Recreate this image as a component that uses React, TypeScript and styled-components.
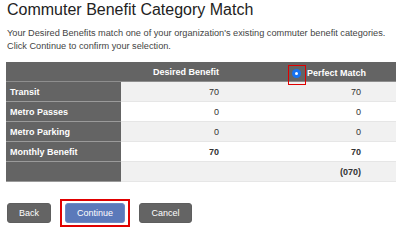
import React, { useState } from "react";
import styled, { createGlobalStyle } from "styled-components";

const GlobalStyle = createGlobalStyle`
  body {
    margin: 0;
    background: #ffffff;
    font-family: "Liberation Sans", Arial, sans-serif;
    color: #333333;
  }
`;

const Page = styled.div`
  padding: 0 2px 0 7px;
`;

const Title = styled.h1`
  margin: 0;
  padding-top: 1px;
  font-size: 16px;
  font-weight: normal;
  line-height: 18px;
  color: #222222;
`;

const Intro = styled.p`
  margin: 8px 0 9px;
  font-size: 9.2px;
  line-height: 13px;
  color: #444444;
`;

const Table = styled.table`
  width: 390px;
  margin-left: -1px;
  border-collapse: collapse;
  font-size: 9px;
  table-layout: fixed;
`;

const HeadCell = styled.th<{ $width?: number }>`
  background: #646464;
  color: #ffffff;
  font-weight: bold;
  text-align: right;
  height: 19px;
  padding: 0 4px;
  border-bottom: 1px solid #8e8e8e;
  width: ${(p) => (p.$width ? `${p.$width}px` : "auto")};
  white-space: nowrap;
`;

const Row = styled.tr<{ $shaded: boolean }>`
  background: ${(p) => (p.$shaded ? "#f1f1f1" : "#ffffff")};
`;

const Label = styled.th`
  background: #646464;
  color: #ffffff;
  font-weight: bold;
  text-align: left;
  height: 19px;
  padding: 0 4px;
  border-bottom: 1px solid #9a9a9a;
`;

const Value = styled.td<{ $bold?: boolean; $pad?: number }>`
  text-align: right;
  padding: 0 ${(p) => p.$pad ?? 4}px 0 4px;
  height: 19px;
  color: #333333;
  font-weight: ${(p) => (p.$bold ? "bold" : "normal")};
  border-bottom: 1px solid #e6e6e6;
`;

const Spacer = styled.td`
  border-bottom: 1px solid #e6e6e6;
`;

const Pick = styled.label`
  display: inline-flex;
  align-items: center;
  gap: 1px;
`;

const RadioFrame = styled.span`
  position: relative;
  top: 2px;
  display: inline-flex;
  align-items: center;
  justify-content: center;
  box-sizing: border-box;
  width: 18px;
  height: 20px;
  margin: -6px 0;
  padding-bottom: 4px;
  border: 1px solid #e00000;
`;

const Radio = styled.span<{ $on: boolean }>`
  width: 9px;
  height: 9px;
  border-radius: 50%;
  background: ${(p) => (p.$on ? "#1672f0" : "#ffffff")};
  display: flex;
  align-items: center;
  justify-content: center;
  &::after {
    content: "";
    width: 3px;
    height: 3px;
    border-radius: 50%;
    background: #ffffff;
  }
`;

const Actions = styled.div`
  display: flex;
  align-items: center;
  gap: 9px;
  margin-top: 17px;
`;

const Button = styled.button<{ $primary?: boolean; $width: number }>`
  width: ${(p) => p.$width}px;
  height: 20px;
  padding: 0;
  border: 1px solid ${(p) => (p.$primary ? "#6f8ac4" : "#5e5e5e")};
  border-radius: 3px;
  background: ${(p) => (p.$primary ? "#5b79ba" : "#646464")};
  color: #ffffff;
  font-family: "Liberation Sans", Arial, sans-serif;
  font-size: 9px;
  cursor: pointer;
`;

const Focus = styled.span`
  display: inline-flex;
  padding: 2px 3px;
  border: 2px solid #e00000;
`;

const rows = [
  { label: "Transit", desired: "70", match: "70" },
  { label: "Metro Passes", desired: "0", match: "0" },
  { label: "Metro Parking", desired: "0", match: "0" },
  { label: "Monthly Benefit", desired: "70", match: "70", bold: true },
  { label: "", desired: "", match: "(070)", bold: true },
];

export default function App() {
  const [picked, setPicked] = useState(true);

  return (
    <Page>
      <GlobalStyle />
      <Title>Commuter Benefit Category Match</Title>
      <Intro>
        Your Desired Benefits match one of your organization's existing commuter benefit categories.
        <br />
        Click Continue to confirm your selection.
      </Intro>
      <Table>
        <thead>
          <tr>
            <HeadCell $width={107} />
            <HeadCell $width={94}>Desired Benefit</HeadCell>
            <HeadCell $width={139}>
              <Pick onClick={() => setPicked(true)}>
                <RadioFrame>
                  <Radio $on={picked} />
                </RadioFrame>
                Perfect Match
              </Pick>
            </HeadCell>
            <HeadCell />
          </tr>
        </thead>
        <tbody>
          {rows.map((r, i) => (
            <Row key={i} $shaded={i % 2 === 0}>
              <Label>{r.label}</Label>
              <Value $bold={r.bold}>{r.desired}</Value>
              <Value $bold={r.bold} $pad={9}>
                {r.match}
              </Value>
              <Spacer />
            </Row>
          ))}
        </tbody>
      </Table>
      <Actions>
        <Button $width={44}>Back</Button>
        <Focus>
          <Button $primary $width={60}>
            Continue
          </Button>
        </Focus>
        <Button $width={53}>Cancel</Button>
      </Actions>
    </Page>
  );
}
